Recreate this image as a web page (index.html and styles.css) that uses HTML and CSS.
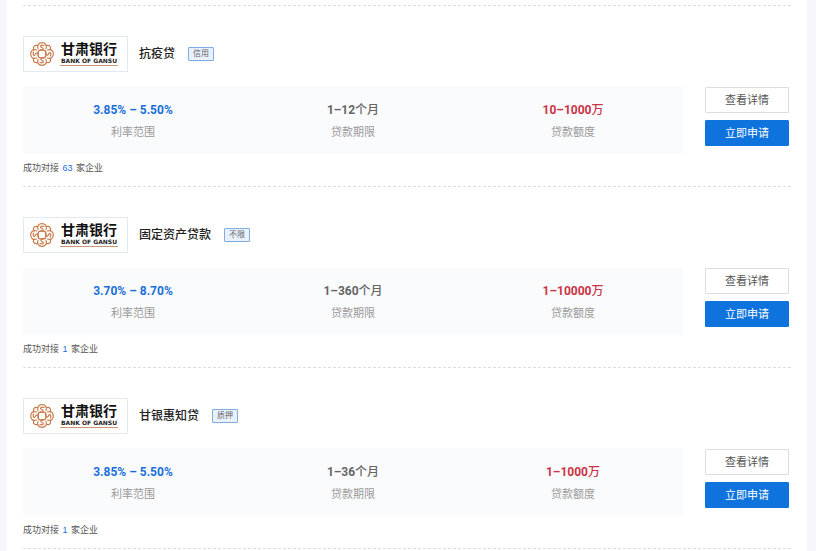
FILE: index.html
```html
<!DOCTYPE html>
<html lang="zh-CN">
<head>
    <meta charset="UTF-8">
    <meta name="viewport" content="width=device-width, initial-scale=1.0">
    <title>贷款产品列表</title>
    <link rel="stylesheet" href="styles.css">
</head>
<body>

    <!-- 银行标志图形，供各产品复用 -->
    <svg class="icon-defs" width="0" height="0" aria-hidden="true">
        <symbol id="gansu-emblem" viewBox="0 0 24 24">
            <g fill="none" stroke="#c9794a" stroke-width="1.2" stroke-linecap="round">
                <g id="petal">
                    <path d="M8 6.6C6.6 3 8.8 .7 12 .7s5.4 2.3 4 5.9"/>
                    <path d="M14 3.5C11 2.4 9.4 4.3 11.6 5.3c2.6 1.1 2 3.1-1.4 2.9"/>
                    <path d="M16.4 3.6c3-.8 4.8 1 4 4"/>
                </g>
                <use href="#petal" transform="rotate(90 12 12)"/>
                <use href="#petal" transform="rotate(180 12 12)"/>
                <use href="#petal" transform="rotate(270 12 12)"/>
                <rect x="8.2" y="8.2" width="7.6" height="7.6" rx="2.4"/>
            </g>
        </symbol>
    </svg>

    <main class="product-list">
        <!-- 抗疫贷 -->
        <section class="product">
            <div class="product-header">
                <div class="bank-logo">
                    <svg class="bank-emblem" aria-hidden="true"><use href="#gansu-emblem"/></svg>
                    <div class="bank-name">
                        <span class="bank-cn">甘肃银行</span>
                        <span class="bank-en">BANK OF GANSU</span>
                    </div>
                </div>
                <h3>抗疫贷</h3>
                <span class="tag">信用</span>
            </div>
            <div class="product-body">
                <dl class="info">
                    <div class="info-item rate">
                        <dt>利率范围</dt>
                        <dd>3.85% – 5.50%</dd>
                    </div>
                    <div class="info-item term">
                        <dt>贷款期限</dt>
                        <dd>1–12<span class="unit">个月</span></dd>
                    </div>
                    <div class="info-item amount">
                        <dt>贷款额度</dt>
                        <dd>10–1000<span class="unit">万</span></dd>
                    </div>
                </dl>
                <div class="actions">
                    <button type="button">查看详情</button>
                    <button type="button" class="btn-primary">立即申请</button>
                </div>
            </div>
            <p class="matched">成功对接 <span class="count">63</span> 家企业</p>
        </section>

        <!-- 固定资产贷款 -->
        <section class="product">
            <div class="product-header">
                <div class="bank-logo">
                    <svg class="bank-emblem" aria-hidden="true"><use href="#gansu-emblem"/></svg>
                    <div class="bank-name">
                        <span class="bank-cn">甘肃银行</span>
                        <span class="bank-en">BANK OF GANSU</span>
                    </div>
                </div>
                <h3>固定资产贷款</h3>
                <span class="tag">不限</span>
            </div>
            <div class="product-body">
                <dl class="info">
                    <div class="info-item rate">
                        <dt>利率范围</dt>
                        <dd>3.70% – 8.70%</dd>
                    </div>
                    <div class="info-item term">
                        <dt>贷款期限</dt>
                        <dd>1–360<span class="unit">个月</span></dd>
                    </div>
                    <div class="info-item amount">
                        <dt>贷款额度</dt>
                        <dd>1–10000<span class="unit">万</span></dd>
                    </div>
                </dl>
                <div class="actions">
                    <button type="button">查看详情</button>
                    <button type="button" class="btn-primary">立即申请</button>
                </div>
            </div>
            <p class="matched">成功对接 <span class="count">1</span> 家企业</p>
        </section>

        <!-- 甘银惠知贷 -->
        <section class="product">
            <div class="product-header">
                <div class="bank-logo">
                    <svg class="bank-emblem" aria-hidden="true"><use href="#gansu-emblem"/></svg>
                    <div class="bank-name">
                        <span class="bank-cn">甘肃银行</span>
                        <span class="bank-en">BANK OF GANSU</span>
                    </div>
                </div>
                <h3>甘银惠知贷</h3>
                <span class="tag">质押</span>
            </div>
            <div class="product-body">
                <dl class="info">
                    <div class="info-item rate">
                        <dt>利率范围</dt>
                        <dd>3.85% – 5.50%</dd>
                    </div>
                    <div class="info-item term">
                        <dt>贷款期限</dt>
                        <dd>1–36<span class="unit">个月</span></dd>
                    </div>
                    <div class="info-item amount">
                        <dt>贷款额度</dt>
                        <dd>1–1000<span class="unit">万</span></dd>
                    </div>
                </dl>
                <div class="actions">
                    <button type="button">查看详情</button>
                    <button type="button" class="btn-primary">立即申请</button>
                </div>
            </div>
            <p class="matched">成功对接 <span class="count">1</span> 家企业</p>
        </section>
    </main>

</body>
</html>
```
FILE: styles.css
```css
* {
    box-sizing: border-box;
}

body {
    margin: 0;
    background-color: #f5f7fc;
    font-family: "Liberation Sans", "Noto Sans CJK SC", sans-serif;
    color: #333;
}

.icon-defs {
    position: absolute;
}

/* 列表容器 */
.product-list {
    min-height: 100vh;
    margin: 0 9px 0 7px;
    padding: 5px 16px 0;
    background-color: #fff;
}

/* 单个产品 */
.product {
    padding-top: 30px;
    border-bottom: 1px dashed #ddd;
}

.product:first-child {
    border-top: 1px dashed #ddd;
}

.product-header {
    display: flex;
    align-items: center;
    height: 36px;
}

.product-header h3 {
    margin: 0 13px 0 11px;
    font-size: 12px;
    font-weight: 500;
    line-height: 18px;
    color: #222;
}

/* 银行标志 */
.bank-logo {
    display: flex;
    align-items: center;
    gap: 6px;
    width: 105px;
    height: 36px;
    padding-left: 6px;
    border: 1px solid #e4e8f0;
}

.bank-emblem {
    width: 24px;
    height: 24px;
}

.bank-name {
    display: flex;
    flex-direction: column;
    align-items: center;
    width: 58px;
    border-bottom: 1px solid #cf9478;
}

.bank-cn {
    font-size: 14px;
    font-weight: bold;
    line-height: 15px;
    color: #111;
}

.bank-en {
    font-family: "DejaVu Sans", sans-serif;
    font-size: 6px;
    font-weight: bold;
    line-height: 8px;
    color: #222;
    white-space: nowrap;
}

/* 标签 */
.tag {
    width: 26px;
    border: 1px solid #7fade3;
    border-radius: 1px;
    background-color: #e9f1fd;
    font-size: 8px;
    line-height: 12px;
    text-align: center;
    color: #666;
}

/* 利率、期限、额度 */
.product-body {
    display: flex;
    gap: 22px;
    margin-top: 14px;
    padding-right: 2px;
}

.info {
    display: flex;
    flex: 1;
    height: 68px;
    margin: 0;
    background-color: #fafbfd;
}

.info-item {
    display: flex;
    flex: 1;
    flex-direction: column-reverse;
    justify-content: center;
    gap: 4px;
    padding-top: 2px;
    text-align: center;
}

.info-item dt {
    font-size: 11px;
    line-height: 18px;
    color: #999;
}

.info-item dd {
    margin: 0;
    font-family: Roboto, "Noto Sans CJK SC", sans-serif;
    font-size: 12px;
    font-weight: bold;
    line-height: 18px;
}

.info-item .unit {
    font-weight: 500;
}

.rate dd {
    color: #1a6edb;
}

.term dd {
    color: #666;
}

.amount dd {
    color: #cc3344;
}

/* 按钮 */
.actions {
    display: flex;
    flex-direction: column;
    gap: 7px;
    width: 84px;
    padding-top: 1px;
}

.actions button {
    height: 26px;
    padding: 0;
    border: 1px solid #ddd;
    border-radius: 1px;
    background-color: #fff;
    font-family: inherit;
    font-size: 11px;
    line-height: 22px;
    color: #555;
    cursor: pointer;
}

.actions .btn-primary {
    border-color: #0f73dd;
    background-color: #0f73dd;
    color: #fff;
}

/* 对接企业数 */
.matched {
    margin: 0;
    padding: 6px 0 10px;
    font-size: 9px;
    line-height: 16px;
    color: #555;
}

.matched .count {
    margin: 0 1px;
    color: #1a6edb;
}
```
